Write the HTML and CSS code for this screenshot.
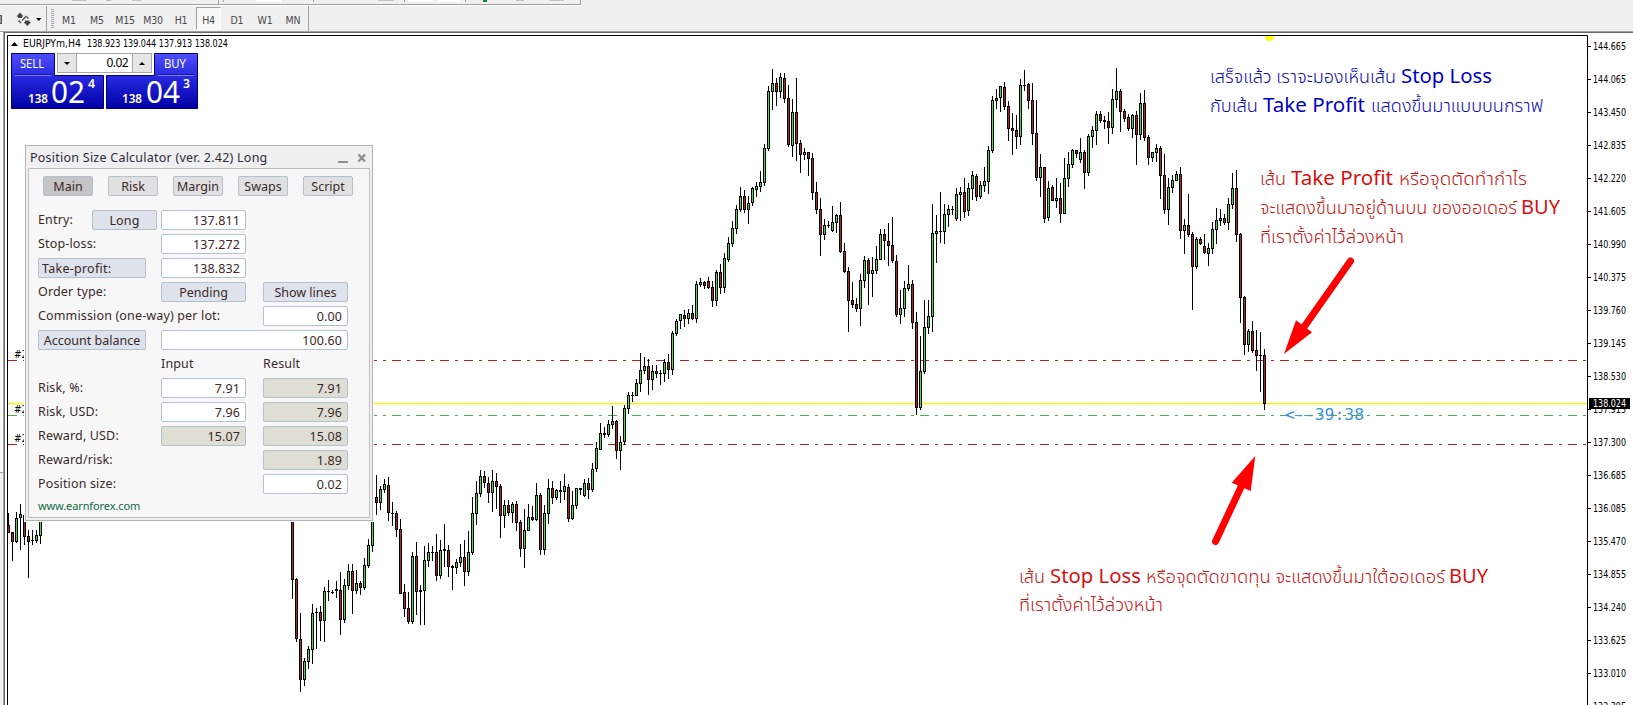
FILE: index.html
```
<!DOCTYPE html>
<html lang="th">
<head>
    <meta charset="UTF-8">
    <meta name="viewport" content="width=device-width, initial-scale=1.0">
    <title>EURJPYm,H4</title>
    <link rel="stylesheet" href="styles.css">
</head>
<body>
    <header class="toolbars">
        <svg class="toolbar-top" width="1633" height="6" viewBox="0 0 1633 6">
            <rect x="72" y="0" width="15" height="1" fill="#c4c4c4"/>
            <rect x="106" y="0" width="5" height="1" fill="#bbb"/>
            <rect x="132" y="0" width="9" height="1" fill="#c4c4c4"/>
            <rect x="256" y="0" width="25" height="2" fill="#fff"/>
            <rect x="378" y="0" width="16" height="1" fill="#c4c4c4"/>
            <rect x="408" y="0" width="24" height="2" fill="#fff"/>
            <rect x="437" y="0" width="23" height="2" fill="#fff"/>
            <rect x="483" y="0" width="4" height="2" fill="#13862b"/>
            <rect x="516" y="0" width="8" height="1" fill="#c0c0c0"/>
            <rect x="549" y="0" width="15" height="1" fill="#c4c4c4"/>
            <path d="M218.5 0V4M223.5 0V2M313.5 0V2M404.5 0V2M465.5 0V2M580.5 0V4" stroke="#a0a0a0"/>
            <path d="M0 4.5H581" stroke="#a0a0a0"/>
            <path d="M0 5.5H582" stroke="#fff"/>
        </svg>
        <div class="toolbar">
            <svg class="tool-icons" width="47" height="25" viewBox="0 0 47 25">
                <rect x="-3" y="9.500" width="4.500" height="8" fill="#999" stroke="#555"/>
                <path d="M20 6.500l3.500 4H22V12h-4v-1.500h-1.500z" fill="#444"/>
                <path d="M27.500 20l-4-4H25v-1.500h4.500V16H31z" fill="#444"/>
                <path d="M18.500 14.500l2.500 2.500M22 14.500l4.500-4.500M27 11l1.500 1.500" stroke="#555" stroke-width="1.500" fill="none"/>
                <path d="M36 12h5.500l-2.750 3z" fill="#000"/>
                <path d="M46.500 0v25" stroke="#a0a0a0"/>
            </svg>
            <span class="grip"></span>
            <nav class="periods">
                <span>M1</span>
                <span>M5</span>
                <span>M15</span>
                <span>M30</span>
                <span>H1</span>
                <span class="active">H4</span>
                <span>D1</span>
                <span>W1</span>
                <span>MN</span>
            </nav>
        </div>
    </header>

    <main class="workspace">
        <aside class="dock">
            <div class="dock-top"></div>
            <div class="dock-bottom"></div>
        </aside>
        <section class="chart-window">
            <svg id="chart" width="1633" height="705" viewBox="0 0 1633 705">
                <path d="M1265 36h9c0 3-2 5-4.500 5s-4.500-2-4.500-5z" fill="#ff0"/>
                <g id="levels"></g>
                <g class="order-tags">
                    <text x="14" y="358">#2</text>
                    <text x="14" y="413">#2</text>
                    <text x="14" y="442">#2</text>
                </g>
                <g id="candles" shape-rendering="crispEdges"></g>
                <path d="M7.500 705V35.500H1587.500V705" fill="none" stroke="#000"/>
                <g id="axis"></g>

                <path d="M11 46h7l-3.500-4z" fill="#000"/>
                <text class="small" x="23" y="47" textLength="58" lengthAdjust="spacingAndGlyphs">EURJPYm,H4</text>
                <text class="small" x="87" y="47" textLength="141" lengthAdjust="spacingAndGlyphs">138.923 139.044 137.913 138.024</text>

                <text class="timer" x="1285" y="420" textLength="79" lengthAdjust="spacingAndGlyphs">&lt;--39:38</text>

                <g class="note blue">
                    <text x="1210" y="83" textLength="186" lengthAdjust="spacingAndGlyphs">เสร็จแล้ว เราจะมองเห็นเส้น</text>
                    <text class="latin" x="1401" y="83" textLength="91" lengthAdjust="spacingAndGlyphs">Stop Loss</text>
                    <text x="1210" y="112" textLength="48" lengthAdjust="spacingAndGlyphs">กับเส้น</text>
                    <text class="latin" x="1263" y="112" textLength="102" lengthAdjust="spacingAndGlyphs">Take Profit</text>
                    <text x="1371" y="112" textLength="172" lengthAdjust="spacingAndGlyphs">แสดงขึ้นมาแบบบนกราฟ</text>
                </g>
                <g class="note red">
                    <text x="1260" y="185" textLength="26" lengthAdjust="spacingAndGlyphs">เส้น</text>
                    <text class="latin" x="1291" y="185" textLength="102" lengthAdjust="spacingAndGlyphs">Take Profit</text>
                    <text x="1399" y="185" textLength="128" lengthAdjust="spacingAndGlyphs">หรือจุดตัดทำกำไร</text>
                    <text x="1260" y="214" textLength="257" lengthAdjust="spacingAndGlyphs">จะแสดงขึ้นมาอยู่ด้านบน ของออเดอร์</text>
                    <text class="latin" x="1521" y="214" textLength="39" lengthAdjust="spacingAndGlyphs">BUY</text>
                    <text x="1260" y="243" textLength="144" lengthAdjust="spacingAndGlyphs">ที่เราตั้งค่าไว้ล่วงหน้า</text>
                    <text x="1019" y="583" textLength="26" lengthAdjust="spacingAndGlyphs">เส้น</text>
                    <text class="latin" x="1050" y="583" textLength="91" lengthAdjust="spacingAndGlyphs">Stop Loss</text>
                    <text x="1146" y="583" textLength="299" lengthAdjust="spacingAndGlyphs">หรือจุดตัดขาดทุน จะแสดงขึ้นมาใต้ออเดอร์</text>
                    <text class="latin" x="1449" y="583" textLength="39" lengthAdjust="spacingAndGlyphs">BUY</text>
                    <text x="1019" y="611" textLength="144" lengthAdjust="spacingAndGlyphs">ที่เราตั้งค่าไว้ล่วงหน้า</text>
                </g>

                <g class="arrows">
                    <path d="M1350.500 261L1304 327"/>
                    <polygon points="1284,354 1296,320.300 1312,332.300"/>
                    <path d="M1215.500 541.500L1241 487"/>
                    <polygon points="1255.300,456 1231.700,482.700 1250.700,491"/>
                </g>

                <defs>
                    <linearGradient id="quote" x1="0" y1="53" x2="0" y2="109" gradientUnits="userSpaceOnUse">
                        <stop offset="0" stop-color="#5050ff"/>
                        <stop offset="0.500" stop-color="#2222d8"/>
                        <stop offset="1" stop-color="#0000a4"/>
                    </linearGradient>
                </defs>
                <g class="quotes">
                    <path class="quote-box" d="M11.500 53.500H54.500V75.500H103.500V108.500H11.500z"/>
                    <path class="quote-box" d="M197.500 53.500H154.500V75.500H106.500V108.500H197.500z"/>
                    <path d="M15 74.500H51M158 74.500H194" stroke="#1414a8"/>
                    <path d="M15 75.500H51M158 75.500H194" stroke="#8080ff"/>
                    <text x="20" y="68" font-size="12.500" textLength="24" lengthAdjust="spacingAndGlyphs">SELL</text>
                    <text x="164" y="68" font-size="12.500" textLength="22" lengthAdjust="spacingAndGlyphs">BUY</text>
                    <text class="bold" x="28" y="103" font-size="12.500" textLength="20" lengthAdjust="spacingAndGlyphs">138</text>
                    <text x="51" y="103" font-size="30" textLength="34" lengthAdjust="spacingAndGlyphs">02</text>
                    <text class="bold" x="88" y="88" font-size="12.500" textLength="7" lengthAdjust="spacingAndGlyphs">4</text>
                    <text class="bold" x="122" y="103" font-size="12.500" textLength="20" lengthAdjust="spacingAndGlyphs">138</text>
                    <text x="146" y="103" font-size="30" textLength="34" lengthAdjust="spacingAndGlyphs">04</text>
                    <text class="bold" x="183" y="88" font-size="12.500" textLength="7" lengthAdjust="spacingAndGlyphs">3</text>
                </g>
            </svg>

            <div class="volume">
                <span class="step down"></span>
                <span class="lots">0.02</span>
                <span class="step up"></span>
            </div>

            <div class="calculator">
                <div class="calc-title">
                    <span>Position Size Calculator (ver. 2.42) Long</span>
                    <svg width="32" height="12" viewBox="0 0 32 12">
                        <path d="M2 10h10" stroke="#8f8f8f" stroke-width="2"/>
                        <path d="M22.500 2.500l6.500 7M29 2.500l-6.500 7" stroke="#8f8f8f" stroke-width="2.400"/>
                    </svg>
                </div>
                <div class="calc-body">
                    <div class="tabs">
                        <span class="tab current">Main</span>
                        <span class="tab">Risk</span>
                        <span class="tab">Margin</span>
                        <span class="tab">Swaps</span>
                        <span class="tab">Script</span>
                    </div>
                    <div class="row">
                        <div class="label split">Entry: <span class="btn side">Long</span></div>
                        <div class="field">137.811</div>
                    </div>
                    <div class="row">
                        <div class="label">Stop-loss:</div>
                        <div class="field">137.272</div>
                    </div>
                    <div class="row">
                        <div class="btn wide left">Take-profit:</div>
                        <div class="field">138.832</div>
                    </div>
                    <div class="row">
                        <div class="label">Order type:</div>
                        <div class="btn">Pending</div>
                        <div class="btn">Show lines</div>
                    </div>
                    <div class="row">
                        <div class="label long">Commission (one-way) per lot:</div>
                        <div class="field">0.00</div>
                    </div>
                    <div class="row">
                        <div class="btn wide">Account balance</div>
                        <div class="field balance">100.60</div>
                    </div>
                    <div class="row">
                        <div class="label"></div>
                        <div class="label">Input</div>
                        <div class="label">Result</div>
                    </div>
                    <div class="row">
                        <div class="label">Risk, %:</div>
                        <div class="field">7.91</div>
                        <div class="field readonly">7.91</div>
                    </div>
                    <div class="row">
                        <div class="label">Risk, USD:</div>
                        <div class="field">7.96</div>
                        <div class="field readonly">7.96</div>
                    </div>
                    <div class="row">
                        <div class="label">Reward, USD:</div>
                        <div class="field readonly">15.07</div>
                        <div class="field readonly">15.08</div>
                    </div>
                    <div class="row">
                        <div class="label long">Reward/risk:</div>
                        <div class="field readonly">1.89</div>
                    </div>
                    <div class="row">
                        <div class="label long">Position size:</div>
                        <div class="field">0.02</div>
                    </div>
                    <a class="site">www.earnforex.com</a>
                </div>
            </div>
        </section>
    </main>

    <script src="chart.js"></script>
</body>
</html>
```
FILE: styles.css
```
* {
    margin: 0;
    padding: 0;
    box-sizing: border-box;
}

body {
    width: 1633px;
    height: 705px;
    overflow: hidden;
    background: #f0f0f0;
    font-family: 'Noto Sans', 'Open Sans', sans-serif;
    display: flex;
    flex-direction: column;
}

/* toolbars */
.toolbars {
    height: 31px;
    flex: none;
}

.toolbar-top {
    display: block;
}

.toolbar {
    display: flex;
    height: 25px;
    width: 309px;
    border-right: 1px solid #a0a0a0;
}

.tool-icons {
    flex: none;
}

.grip {
    width: 3px;
    height: 20px;
    margin: 3px 1px 0 4px;
    background: repeating-linear-gradient(#a8a8a8 0 1px, #f0f0f0 1px 2px);
}

.periods {
    display: flex;
}

.periods span {
    width: 28px;
    height: 25px;
    display: flex;
    align-items: center;
    justify-content: center;
    padding-top: 2px;
    font-family: 'DejaVu Sans Condensed', 'DejaVu Sans', sans-serif;
    font-stretch: condensed;
    font-size: 10.5px;
    letter-spacing: -0.2px;
    color: #484848;
}

.periods .active {
    width: 25px;
    height: 23px;
    margin: 1px 2px 0 1px;
    background: #f8f8f8;
    border: 1px solid #a0a0a0;
    border-right-color: #fff;
    border-bottom-color: #fff;
}

/* workspace */
.workspace {
    flex: 1;
    display: flex;
    border-top: 1px solid #a0a0a0;
}

.dock {
    width: 4px;
    display: flex;
    flex-direction: column;
    border-right: 1px solid #a0a0a0;
}

.dock-top {
    height: 441px;
    background: #fafafa;
    border-bottom: 1px solid #a0a0a0;
}

.chart-window {
    flex: 1;
    background: #fff;
    border-top: 1px solid #696969;
    border-left: 1px solid #696969;
}

#chart {
    position: absolute;
    left: 0;
    top: 0;
}

.small, .order-tags text {
    font-family: 'DejaVu Sans Condensed', 'DejaVu Sans', sans-serif;
    font-stretch: condensed;
    font-size: 10px;
    fill: #000;
}

.timer {
    font-family: 'DejaVu Sans Mono', monospace;
    font-size: 16px;
    fill: #3a92dc;
}

.note {
    font-size: 18px;
    font-weight: 300;
    font-family: 'Noto Sans Thai', 'Noto Sans', sans-serif;
}

.note .latin {
    font-family: 'Noto Sans', sans-serif;
    font-size: 20.5px;
    font-weight: 400;
}

.blue {
    fill: #0a0ab4;
}

.blue .latin {
    fill: #0000c8;
}

.red {
    fill: #c41414;
}

.red .latin {
    fill: #d80f0f;
}

.arrows path {
    stroke: #f00;
    stroke-width: 7;
    stroke-linecap: round;
}

.arrows polygon {
    fill: #f00;
}

.quotes text {
    fill: #fff;
}

.quotes .bold {
    font-weight: 600;
}

.quote-box {
    fill: url(#quote);
    stroke: #000078;
}

.volume {
    position: absolute;
    left: 57px;
    top: 53px;
    width: 95px;
    height: 20px;
    display: flex;
    border: 1px solid #a8a8a8;
    background: #fff;
}

.lots {
    flex: 1;
    font-size: 12px;
    line-height: 18px;
    letter-spacing: -0.6px;
    text-align: right;
    padding-right: 4px;
    border-left: 1px solid #a8a8a8;
    border-right: 1px solid #a8a8a8;
}

.step {
    width: 18px;
    display: flex;
    align-items: center;
    justify-content: center;
    background: #e6e6e6;
}

.step::before {
    content: '';
    border: 3px solid transparent;
}

.down::before {
    border-top-color: #000;
    border-bottom: 0;
}

.up::before {
    border-bottom-color: #000;
    border-top: 0;
}

/* position size calculator */
.calculator {
    position: absolute;
    left: 25px;
    top: 145px;
    width: 348px;
    height: 376px;
    padding: 0 2px 2px;
    background: #f0f0f0;
    border: 1px solid #b4b4b4;
    outline: 1px solid #fff;
    font-size: 12.5px;
    color: #3b2929;
    display: flex;
    flex-direction: column;
}

.calc-title {
    height: 22px;
    padding: 1px 2px 0;
    display: flex;
    align-items: center;
    justify-content: space-between;
    letter-spacing: 0.24px;
    color: #2c2c3c;
}

.calc-body {
    flex: 1;
    padding: 7px 9px 0;
    background: #f7f7f7;
    border: 1px solid #c0c0c0;
}

.tabs {
    display: flex;
    gap: 15px;
    margin: 0 0 14px 5px;
}

.tab, .btn, .field {
    height: 20px;
    line-height: 20px;
    border: 1px solid #b2c3cf;
    border-radius: 2px;
    white-space: nowrap;
}

.tab {
    width: 50px;
    text-align: center;
    background: #e0e0e0;
}

.tab.current {
    background: #c5c5c5;
}

.row {
    display: grid;
    grid-template-columns: 123px 102px 85px;
    height: 24px;
}

.label {
    line-height: 20px;
    letter-spacing: 0.15px;
    white-space: nowrap;
}

.split {
    display: flex;
    justify-content: space-between;
    padding-right: 4px;
}

.long {
    grid-column: span 2;
}

.btn {
    width: 85px;
    text-align: center;
    background: #dde2eb;
}

.side {
    width: 65px;
}

.wide {
    width: 108px;
}

.left {
    text-align: left;
    padding-left: 3px;
    letter-spacing: 0.25px;
}

.field {
    width: 85px;
    padding-right: 5px;
    text-align: right;
    letter-spacing: 0.1px;
    background: #fff;
}

.balance {
    width: 187px;
}

.readonly {
    background: #deded5;
}

.site {
    display: block;
    margin-top: -1px;
    font-size: 11px;
    line-height: 18px;
    letter-spacing: -0.1px;
    color: #0c6b3c;
}
```
FILE: chart.js
```
const SVG = 'http://www.w3.org/2000/svg';
const candlesGroup = document.getElementById('candles');
const levelsGroup = document.getElementById('levels');
const axisGroup = document.getElementById('axis');

function add(parent, name, attrs, text) {
    const el = document.createElementNS(SVG, name);
    for (const key in attrs) {
        el.setAttribute(key, attrs[key]);
    }
    if (text) el.textContent = text;
    parent.appendChild(el);
}

// each run starts at x, one bar every 4px: direction, high, body top, body bottom, low
const runs = [
    { x: 8, bars: `r513 525 533 533,r532 532 542 561,g512 518 542 543,g504 514 518 550,r513 515 537 545,r530 536 542 578,
d530 540 541 545,g530 535 541 543,g500 500 536 544` },
    { x: 292, bars: `r500 500 580 599,r578 579 639 642,r613 639 680 692,g658 661 680 686,g646 649 662 669,g604 613 650 664,
d608 612 613 649,r606 612 621 641,g587 591 621 642,d580 591 592 601,d590 592 593 594,d581 589 591 598,r572 590 620 635,
g579 585 620 623,g564 571 586 590,r564 571 591 614,g570 583 591 594,r581 583 588 595,g558 565 588 590,g539 545 566 568,
g500 500 546 552,r475 497 503 515,g486 489 503 510,g479 484 490 493,r477 485 513 521,d502 513 514 526,r511 513 530 537,
r519 529 594 594,r584 592 609 617,r592 608 622 624,g552 556 622 624,r542 556 592 615,d585 590 592 625,g546 560 591 625,
g543 552 561 567,d546 552 553 561,r534 552 576 581,g540 550 576 579,d524 549 551 567,r545 550 567 577,d565 566 568 590,
g559 562 568 574,g544 557 563 567,r540 557 572 586,g531 552 572 576,g497 513 553 555,g481 493 514 525,g470 476 494 497,
r471 476 483 488,r477 483 493 503,g470 481 493 512,r473 481 487 509,r484 486 516 538,g500 505 516 528,r500 505 513 516,
g502 504 513 523,r501 504 523 531,r520 522 549 557,g509 530 549 568,g504 517 531 531,r506 517 520 521,g483 495 520 521,
r493 495 550 555,g505 513 550 555,g479 488 514 524,r481 488 498 504,g489 490 498 500,d481 490 492 503,g474 486 492 500,
r484 487 519 522,g491 505 519 520,g488 488 506 509,d488 488 490 495,g479 483 496 497,r478 483 490 499,g463 469 490 492,
g442 448 469 472,g423 433 450 450,d427 433 435 438,g420 424 435 437,g406 421 425 429,r420 421 451 459,g436 442 451 470,
g405 408 442 445,g392 395 409 414,d392 395 396 402,g379 383 396 396,g353 370 384 392,g357 366 371 374,r359 366 380 395,
g365 371 380 390,r365 371 374 378,d370 373 374 385,g359 362 374 382,r354 362 370 379,g331 333 370 375,g319 321 334 336,
g314 314 321 329,r310 315 319 327,g309 313 319 324,r305 313 319 320,g281 284 319 323,g278 282 285 287,r281 282 286 289,
r277 281 288 289,r281 287 301 307,g270 272 301 306,r264 272 288 294,g253 258 288 293,g237 243 260 262,g221 228 244 247,
g205 209 229 234,g187 196 210 212,r190 196 210 213,g196 203 210 224,g187 188 203 206,g182 186 190 197,g171 182 187 192,
g144 148 183 186,g86 91 149 151,g69 83 92 110,r78 83 92 106,g73 77 92 98,r73 78 99 103,r85 98 145 147,g99 112 146 157,
r78 112 144 161,r140 143 155 173,g148 152 155 160,r152 152 159 176,r153 158 193 200,r182 192 210 214,r198 209 235 256,
g219 225 235 240,d221 225 226 228,g206 222 231 232,g214 215 223 233,r202 215 252 253,r243 251 272 273,r267 271 301 332,
r282 300 305 308,r298 304 309 312,g274 280 309 326,g256 260 281 288,r258 260 274 305,g257 270 274 297,g246 259 271 274,
g229 234 260 260,r229 234 241 260,r223 241 246 266,r217 245 261 263,r255 261 315 317,g290 308 315 324,g281 288 309 317,
g265 284 289 291,r280 284 323 329,r312 322 408 415,g336 371 408 410,g300 327 372 374,g300 316 328 334,g204 233 317 332,
g215 231 234 263,d192 231 232 243,g204 214 232 244,g205 209 215 227,d206 209 210 215,g188 194 219 221,g187 192 195 221,
r178 192 212 218,g183 188 211 216,g171 175 189 200,r174 176 197 201,g181 185 197 199,g167 181 186 192,g146 150 182 194,
g96 100 151 153,g89 98 101 109,g86 86 98 112,r82 87 107 110,r101 106 129 141,r113 128 131 155,r115 130 137 149,
g79 85 137 145,d70 85 86 91,r83 84 101 109,r83 100 134 145,r100 133 178 181,g154 167 178 197,r167 167 219 223,
g181 188 218 221,r185 187 201 201,g178 198 201 208,r183 198 214 223,g158 178 214 214,g152 164 179 187,g149 150 165 168,
r150 150 154 158,g138 152 160 163,r150 152 173 189,g134 136 173 176,g126 130 137 148,g111 114 131 145,r111 114 121 123,
d116 120 122 129,r112 121 128 144,g89 99 128 134,g68 91 100 108,r89 91 112 132,r109 111 119 122,r114 117 129 131,
g114 115 129 138,r111 115 135 165,g93 103 135 140,r90 103 138 141,r135 137 158 165,g152 152 158 162,g144 148 153 162,
r146 148 176 199,r154 175 210 214,g178 187 210 225,g175 180 188 193,g171 174 181 181,r167 174 231 239,g219 225 231 254,
r194 225 235 237,r232 234 267 310,g237 239 267 269,r237 239 244 245,r234 246 253 254,g243 248 254 266,g222 229 249 254,
g208 220 230 244,g209 218 221 226,r214 218 223 225,g198 204 223 230,g173 188 205 209,r170 188 235 242,r233 234 298 323,
r296 297 345 355,g329 331 345 352,r321 331 351 353,r330 350 356 371,d332 355 356 392,r349 355 404 410` }
];

const colors = { g: '#3fe03f', r: '#b82020' };

runs.forEach(run => {
    run.bars.split(',').forEach((item, i) => {
        const bar = item.trim();
        const [high, top, bottom, low] = bar.slice(1).split(' ').map(Number);
        const x = run.x + i * 4;
        add(candlesGroup, 'rect', { x: x, y: high, width: 1, height: low - high });
        add(candlesGroup, 'rect', { x: x - 1, y: top, width: 3, height: bottom - top });
        if (colors[bar[0]]) {
            add(candlesGroup, 'rect', { x: x, y: top + 1, width: 1, height: bottom - top - 2, fill: colors[bar[0]] });
        }
    });
});

// take profit, entry and stop loss
[[360.5, '#b22222'], [415.5, '#4caf50'], [444.5, '#b22222']].forEach(([y, color]) => {
    add(levelsGroup, 'path', { d: `M8 ${y}H1587`, stroke: color, 'stroke-dasharray': '9 6 3 6' });
});
add(levelsGroup, 'path', { d: 'M8 403.5H1588', stroke: '#ffffa8', 'stroke-width': 3 });
add(levelsGroup, 'path', { d: 'M8 403.5H1588', stroke: '#f4ec50' });

const prices = ['144.665', '144.065', '143.450', '142.835', '142.220', '141.605', '140.990', '140.375', '139.760',
    '139.145', '138.530', '137.915', '137.300', '136.685', '136.085', '135.470', '134.855', '134.240', '133.625',
    '133.010', '132.395'];

function priceLabel(y, price, color) {
    add(axisGroup, 'text', { class: 'small', x: 1593, y: y + 3.5, textLength: 33, lengthAdjust: 'spacingAndGlyphs', style: color ? `fill: ${color}` : '' }, price);
}

prices.forEach((price, i) => {
    const y = 46.5 + i * 33;
    add(axisGroup, 'path', { d: `M1588 ${y}h3`, stroke: '#000' });
    priceLabel(y, price);
});
add(axisGroup, 'rect', { x: 1589, y: 398, width: 41, height: 11 });
priceLabel(403.5, '138.024', '#fff');
```
